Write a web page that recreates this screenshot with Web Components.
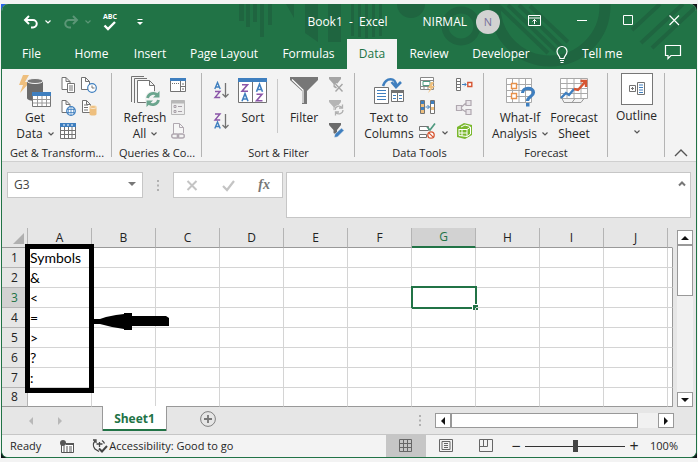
<!DOCTYPE html>
<html lang="en">
<head>
<meta charset="utf-8">
<title>Book1 - Excel</title>
<style>
body { margin: 0; padding: 4px 1px 5px; background: #f3f3f3; font: 12px/16px "Open Sans", "Noto Sans", sans-serif; color: #262626; }
</style>
</head>
<body>
<xl-window></xl-window>
<script>
const BASE = `*{box-sizing:border-box} button{font:inherit;color:inherit;background:none;border:0;padding:0;margin:0} svg{display:block;overflow:visible}`;
function define(name, css, html) {
  customElements.define(name, class extends HTMLElement {
    constructor() {
      super();
      this.attachShadow({ mode: 'open' });
    }
    connectedCallback() {
      const body = typeof html === 'function' ? html(this) : html;
      this.shadowRoot.innerHTML = `<style>${BASE}${css}</style>${body}`;
    }
  });
}

const G = '#737373', B = '#3f7fbf';
const page = (x, y, w, h, c = G) => `<path d="M${x} ${y}h${w - 4}l4 4v${h - 4}h${-w}z M${x + w - 4} ${y}v4h4" fill="#fff" stroke="${c}"/>`;
const funnel = (c) => `<path d="M1 0h12v2L9 7v5L5.500 10V7L1 2z" fill="${c}"/>`;
const ICONS = {
  undo: [16, 14, `<path d="M6 1L2 5l4 4M2 5h8a3.500 3.500 0 010 7.500H8" fill="none" stroke="#fff" stroke-width="2"/>`],
  redo: [16, 14, `<path d="M10 1l4 4-4 4M14 5H6a3.500 3.500 0 000 7.500h2" fill="none" stroke="#5b9676" stroke-width="2"/>`],
  caret: [6, 4, `<path d="M.5.5L3 3 5.500.5" fill="none" stroke="currentColor" stroke-width="1.200"/>`],
  check: [14, 10, `<path d="M1.500 4.500L5 8l7-7" fill="none" stroke="#fff" stroke-width="2.400"/>`],
  more: [6, 6, `<path d="M.5.500h5" stroke="#fff"/><path d="M0 3h6L3 6z" fill="#fff"/>`],
  ribbonopt: [13, 11, `<path d="M.5.500h12v10H.5zM.5 3h12M6.500 9V4.500M4.500 6.500l2-2 2 2" fill="none" stroke="#fff"/>`],
  min: [10, 11, `<path d="M0 5.500h10" stroke="#fff"/>`],
  max: [10, 11, `<path d="M.5.500h9v9h-9z" fill="none" stroke="#fff"/>`],
  close: [10, 11, `<path d="M.5.500l9.500 9.500M10 .5L.5 10" stroke="#fff" stroke-width="1.200"/>`],
  bulb: [12, 17, `<path d="M4 12.500C4 10 1 9 1 5.500a5 5 0 0110 0C11 9 8 10 8 12.500zM4 14.500h4M4.500 16.500h3" fill="none" stroke="#fff" stroke-width="1.200"/>`],
  comment: [16, 14, `<path d="M.5.500h15v10H6l-3 3v-3H.5z" fill="none" stroke="#fff" stroke-width="1.200"/>`],
  getdata: [32, 32, `<path d="M8 0h-4L0 10h4L1 18 11 7H6l4-7z" fill="#eebf7e"/><path d="M8 6v17c0 2 4 3 8 3s8-1 8-3V6z" fill="#6b6b6b"/><ellipse cx="16" cy="6" rx="8" ry="2.500" fill="#777" stroke="#f3f3f3"/><path d="M13.500 17.500h18v14h-18z" fill="#fff" stroke="#777"/><path d="M13 17h19v4H13z" fill="${B}"/><path d="M14 24.500h17M14 28h17M18.500 21v10M23 21v10M27.500 21v10" stroke="#999"/>`],
  textfile: [16, 16, page(2, .5, 8, 12) + `<path d="M7.500 6.500h7v9h-7z" fill="#fff" stroke="${G}"/><path d="M9 9h4M9 11h4M9 13h4" stroke="${G}"/>`],
  recent: [16, 16, page(.5, .5, 8, 12) + `<circle cx="11" cy="11" r="4.300" fill="#fff" stroke="${B}" stroke-width="1.200"/><path d="M11 8.500V11h2.500" fill="none" stroke="${G}"/>`],
  web: [16, 16, page(2, .5, 8, 12) + `<circle cx="11" cy="11" r="4.300" fill="#fff" stroke="${B}" stroke-width="1.200"/><path d="M7 9.500h8M7 12.500h8M11 7v8M9 8c-1 2-1 4 0 6M13 8c1 2 1 4 0 6" fill="none" stroke="${B}" stroke-width=".8"/>`],
  dbfile: [16, 16, page(1.5, .5, 8, 12) + `<path d="M3 5h4M3 7.500h4M3 10h4" stroke="${G}"/><path d="M8.500 7v7c0 1 1.500 1.500 3.500 1.500s3.500-.5 3.500-1.500V7z" fill="#eebf7e"/><ellipse cx="12" cy="7" rx="3.500" ry="1.500" fill="#eebf7e" stroke="#f8e7cd"/>`],
  table: [16, 16, `<path d="M.5.500h15v15H.5z" fill="#fff" stroke="${G}"/><path d="M0 0h16v4H0z" fill="${B}"/><path d="M1 7.500h14M1 11.500h14M4.500 4v11M8.500 4v11M12 4v11" stroke="${G}"/><path d="M3 2h2M7 2h2M11 2h2" stroke="#fff"/>`],
  refresh: [32, 32, `<path d="M2.500 27V1.500H15M5.500 28V3.500H18" fill="none" stroke="${G}"/><path d="M8.500 5.500h12l5 5v17h-17zM20.500 5.500v5h5" fill="#fff" stroke="${G}"/><circle cx="24" cy="24" r="8" fill="#f3f3f3"/><path d="M18.500 23a6 6 0 0110-3M29.500 25a6 6 0 01-10 3" fill="none" stroke="#6ba58e" stroke-width="2.800"/><path d="M30.500 16v6.500H24zM17.500 32v-6.500H24z" fill="#6ba58e"/>`],
  pane: [16, 14, `<path d="M.5.500h15v13H.5z" fill="#fff" stroke="${G}"/><path d="M0 0h16v3H0z" fill="${B}"/><path d="M2 5.500h1M4 5.500h1M6 5.500h1M8 5.500h1M10.500 3v10M11 8.500h4M12 6h2M12 11h2" stroke="${G}"/>`],
  props: [14, 15, `<path d="M.5.500h13v14H.5z" fill="#eee" stroke="#b8b8b8"/><path d="M.5 2h13" stroke="#b8b8b8" stroke-width="3"/><path d="M3 5.500h2v2H3zM3 10.500h2v2H3zM7 6.500h4M7 11.500h4" fill="none" stroke="#a8a0a8"/>`],
  link: [14, 16, `<path d="M2.500 11V.5h6l4 4V10M8.500.500v4h4" fill="#f6f6f6" stroke="#b0a8b0"/><rect x=".7" y="11" width="7" height="4" rx="2" fill="none" stroke="#b0a8b0" stroke-width="1.400"/><rect x="6.300" y="11" width="7" height="4" rx="2" fill="none" stroke="#b0a8b0" stroke-width="1.400"/>`],
  az: [15, 17, `<path d="M.8 7L3.500 0.500 6.200 7M1.700 5h3.600" fill="none" stroke="${B}" stroke-width="1.400"/><path d="M1 9.500h5L1 15.500h5.200" fill="none" stroke="#8b56a8" stroke-width="1.400"/><path d="M11.500 1v14M8.500 12l3 3 3-3" fill="none" stroke="${G}" stroke-width="1.300"/>`],
  za: [15, 17, `<path d="M1 1h5L1 7h5.200" fill="none" stroke="#8b56a8" stroke-width="1.400"/><path d="M.8 15.500L3.500 9l2.700 6.500M1.700 13.500h3.600" fill="none" stroke="${B}" stroke-width="1.400"/><path d="M11.500 1v14M8.500 12l3 3 3-3" fill="none" stroke="${G}" stroke-width="1.300"/>`],
  sort: [30, 26, `<path d="M.5.500h28v24H.5z" fill="#fff" stroke="${G}"/><path d="M0 0h29v4H0z" fill="${B}"/><path d="M14.500 4v21" stroke="${G}"/><path d="M4 6.700h5.500L4 13.300h6M18.500 16.200h5.500l-5.500 6.600h6" fill="none" stroke="#8b56a8" stroke-width="1.600"/><path d="M4 23.300l3-7.600 3 7.600M5 21h4M18.500 13.800l3-7.600 3 7.600M19.500 11.500h4" fill="none" stroke="${B}" stroke-width="1.600"/>`],
  filter: [28, 28, `<path d="M0 0h28v3L17 14v13h-5V14L0 3z" fill="#777"/><path d="M2 2.500L13 13v13" fill="none" stroke="#fff" stroke-width="1.200"/>`],
  clear: [16, 15, funnel('#a5a5a5') + `<path d="M7.500 7l7 7.500M14.500 7l-7 7.500" stroke="#f3f3f3" stroke-width="3"/><path d="M7.500 7l7 7.500M14.500 7l-7 7.500" stroke="#a5a5a5" stroke-width="1.400"/>`],
  reapply: [16, 15, funnel('#b5b5b5') + `<circle cx="11" cy="10" r="5" fill="#f3f3f3"/><path d="M7 10a4 4 0 017-2.500M15 10a4 4 0 01-7 2.500M14.500 4.500v3.500H11M7.500 15.500V12H11" fill="none" stroke="#b0b0b0" stroke-width="1.300"/>`],
  advanced: [16, 15, funnel('#6b6b6b') + `<path d="M6 14.500l1-3.500 6.500-6 2.500 2.500L9.500 14z" fill="${B}" stroke="#f3f3f3" stroke-width=".6"/>`],
  t2c: [32, 28, `<path d="M10 9c3-9 13-9 13 0M18.500 5l4.500 5 5-5" fill="none" stroke="${B}" stroke-width="2.600"/><path d="M1.500 10.500h14v16h-14z" fill="#fff" stroke="${G}"/><path d="M4 13.500h9M4 16.500h9M4 19.500h9M4 22.500h9" stroke="${B}"/><path d="M18.500 13.500h12v11h-12z" fill="#fff" stroke="${G}"/><path d="M18 13h13v3H18z" fill="${G}"/><path d="M20 18.500h3M26 18.500h3M20 21.500h3M26 21.500h3" stroke="${B}"/><path d="M24.500 16v8" stroke="${G}"/>`],
  flash: [17, 16, `<path d="M1.500.500h13v12h-13zM1.500 3.500h13M1.500 9.500h13M5 9.500v3M9 9.500v3" fill="#fff" stroke="#888"/><path d="M4 4.500h7v4H4z" fill="#fff" stroke="#4f9a80"/><path d="M12 5L9 11h2.500L9 16l7-7h-3l2-4z" fill="#eebf7e"/>`],
  dup: [17, 15, `<path d="M1.500.500h4v13h-4zM11.500.500h4v13h-4z" fill="#fff" stroke="${G}"/><path d="M2 1h3v3H2zM2 7h3v3H2z" fill="${B}"/><path d="M2 4h3v3H2zM2 10h3v3H2zM12 7h3v3h-3z" fill="#eebf7e"/><path d="M12 1h3v3h-3z" fill="${B}"/><path d="M6.500 7h4M8.500 5l2 2-2 2" fill="none" stroke="${B}"/>`],
  valid: [17, 16, `<path d="M.5 3.500h9v4h-9zM.5 11.500h7v3h-7z" fill="#fff" stroke="${G}"/><path d="M8 4l3 3 5-6.500" fill="none" stroke="#4f9a80" stroke-width="1.700"/><circle cx="12" cy="12" r="3.200" fill="#fff" stroke="#d65532" stroke-width="1.300"/><path d="M9.800 9.800l4.400 4.400" stroke="#d65532" stroke-width="1.200"/>`],
  consol: [17, 14, `<path d="M.5.500h4v12h-4zM.5 3.500h4M.5 6.500h4M.5 9.500h4" fill="#fff" stroke="${G}"/><path d="M6 6.500h4M8.500 4.800l1.700 1.700-1.700 1.700" fill="none" stroke="${B}"/><path d="M11.800 4.500h4v4h-4z" fill="#fff" stroke="#d65532" stroke-width="1.400"/>`],
  relation: [17, 16, `<path d="M.5 5.500h5v5h-5zM10 .5h5v5h-5zM10 9.500h5v5h-5zM5.500 7l4.500-4M5.500 9l4.500 3" fill="#e8e4e8" stroke="#b0a8b0" stroke-width="1.200"/>`],
  model: [17, 16, `<path d="M1 4l7-4 8 2v10l-7 4-8-2z" fill="#7ab82e"/><path d="M3 6.500h8v7M3 6v6.500l8 1M3 10h8M6 6.500v6.500M11 6.500l3.500-2.500v7L11 13.500M5 4l4-2 5 1.500" fill="none" stroke="#fff"/>`],
  whatif: [32, 32, `<path d="M2.500 3.500h25v24h-25zM2.500 9.500h25M2.500 15.500h25M2.500 21.500h25M8.500 3.500v24M15 3.500v24M21.500 3.500v24" fill="#fff" stroke="#a9a9a9"/><path d="M7.500 8.500h5v5h-5zM7.500 18.500h5v5h-5z" fill="#fff" stroke="#e8914a" stroke-width="1.400"/><path d="M18.500 18c0-6 11-6 11-.5 0 4-6 4-6 8.500" fill="none" stroke="${B}" stroke-width="3.200"/><path d="M22 28h3.500v3.500H22z" fill="${B}"/>`],
  forecast: [32, 32, `<path d="M2.500 3.500h27v20h-27zM2.500 8.500h27M2.500 13.500h27M2.500 18.500h27M9 3.500v20M16 3.500v20M23 3.500v20" fill="#fff" stroke="#a9a9a9"/><path d="M4 23.500l2 4h8l3-4M14 27.500h9l3-4" fill="none" stroke="#999"/><path d="M3 23l5-5 3 2 5-6" fill="none" stroke="${B}" stroke-width="2.400"/><path d="M16 14l4 1 8-9M22.500 6h5.500v6" fill="none" stroke="#d65532" stroke-width="2.400"/>`],
  outline: [16, 14, `<path d="M.5 3.500h6v6h-6z" fill="#fff" stroke="${G}"/><path d="M2 6.500h3M3.500 5v3" stroke="${G}"/><path d="M8.500.500h7v12h-7z" fill="none" stroke="${G}"/><path d="M10 3h4M10 5.500h4M10 8h4M10 10.500h4" stroke="${B}"/>`],
  collapse: [14, 8, `<path d="M1 7l6-6 6 6" fill="none" stroke="#555" stroke-width="1.400"/>`],
  drop: [8, 4, `<path d="M0 0h8L4 4z" fill="#777"/>`],
  cancel: [12, 11, `<path d="M1.500 1l9 9M10.500 1l-9 9" stroke="#c4c4c4" stroke-width="2"/>`],
  enter: [13, 11, `<path d="M1 6l4 4 7-9" fill="none" stroke="#c4c4c4" stroke-width="2.200"/>`],
  up: [8, 5, `<path d="M1 4.500l3-3 3 3" fill="none" stroke="#777" stroke-width="2"/>`],
  dots: [2, 11, `<path d="M0 0h2v2H0zM0 4.500h2v2H0zM0 9h2v2H0z" fill="#b0b0b0"/>`],
  plus: [16, 16, `<circle cx="8" cy="8" r="7.400" fill="none" stroke="#808080"/><path d="M8 4v8M4 8h8" stroke="#777" stroke-width="1.800"/>`],
  tleft: [4, 8, `<path d="M4 0v8L0 4z" fill="currentColor"/>`],
  tright: [4, 8, `<path d="M0 0v8l4-4z" fill="currentColor"/>`],
  tup: [8, 4, `<path d="M0 4h8L4 0z" fill="currentColor"/>`],
  tdown: [8, 4, `<path d="M0 0h8L4 4z" fill="currentColor"/>`],
  macro: [14, 13, `<path d="M1.500 3.500h12v9h-12z" fill="#fff" stroke="#555"/><path d="M6 3h8v2H6z" fill="#555"/><circle cx="3" cy="3" r="3" fill="#555"/><path d="M3 7h2M6 7h2M9 7h3M3 9h2M6 9h2M9 9h3M3 11h2M6 11h2M9 11h3" stroke="#555"/>`],
  access: [17, 14, `<path d="M4 2a6 6 0 000 8l4 2.500M11 1.500a6 6 0 012.500 3M2 1h3v3M5.500 5h6M8.500 3v5" fill="none" stroke="#444" stroke-width="1.300"/><path d="M8 9.500l3 3 5-5.500" fill="none" stroke="#444" stroke-width="2"/>`],
  normal: [14, 14, `<path d="M.5.500h12v12H.5zM.5 4.500h12M.5 8.500h12M4.500.500v12M8.500.500v12" fill="none" stroke="#666"/>`],
  layout: [14, 14, `<path d="M.5.500h13v12H.5zM3 2.500h8v8H3zM5 4.500h4M5 6.500h4M5 8.500h4" fill="none" stroke="#666"/>`],
  breaks: [14, 14, `<path d="M.5.500h13v12H.5zM.5 7.500h8v-7M4.500.500v7" fill="none" stroke="#666"/>`]
};
define('xl-icon', `:host{display:inline-block;flex:none}`, el => {
  const [w, h, art] = ICONS[el.getAttribute('name')];
  return `<svg width="${w}" height="${h}" viewBox="0 0 ${w} ${h}" aria-hidden="true">${art}</svg>`;
});

define('xl-titlebar', `
:host{display:block;position:relative;background:#217346;color:#fff;overflow:hidden}
.art{position:absolute;top:0;left:0}
.row{position:relative;display:grid;grid-template-columns:1fr auto;height:35px}
.quick{display:flex;align-items:center;gap:6px;padding-left:21px}
.quick button{display:flex}
.faded{color:#5b9676;margin-left:6px}
.spell{flex-direction:column;align-items:center;font-size:7px;line-height:8px;font-weight:700;margin:0 14px 0 6px}
.right{display:flex;align-items:center}
.user{margin:0 9px 0 35px}
.avatar{width:24px;height:24px;border-radius:12px;background:#d2d2d2;color:#77709a;font-size:11px;line-height:24px;text-align:center}
.ctl{display:grid;grid-template-columns:13px 10px 10px 10px;gap:36px;margin:0 17px 2px 28px}
.ctl button{display:flex}`, `
<svg class="art" width="697" height="65" fill="#1f6540" aria-hidden="true">
<path d="M237 0h5v17h-5zM244 0h4v23h-4zM251 0h4v18h-4zM258 0h4v33h-4zM266 0h4v21h-4zM284 0h8v14zM303 0h13v38l-13-9zM326 0h13v38h-13zM349 0h3v32h-3zM356 0h3v33h-3zM363 0h3v34h-3zM370 0h3v33h-3zM377 0h3v32h-3z"/>
<circle cx="409" cy="0" r="14"/><circle cx="459" cy="22" r="16" fill="none" stroke="#1f6540" stroke-width="7"/>
<circle cx="548" cy="2" r="55" fill="none" stroke="#1f6540" stroke-width="11"/>
<path d="M498 3l48 46M506 1l48 46M517 1l44 43M528 2l38 36M630 26l28-26M639 39l42-39M650 44l46-43" stroke="#1f6540" stroke-width="4"/></svg>
<div class="row">
<div class="quick"><button aria-label="Undo"><xl-icon name="undo"></xl-icon></button><xl-icon name="caret"></xl-icon>
<button class="faded" aria-label="Redo"><xl-icon name="redo"></xl-icon></button><xl-icon name="caret" style="color:#5b9676"></xl-icon>
<button class="spell" aria-label="Spelling"><span>ABC</span><xl-icon name="check"></xl-icon></button>
<button aria-label="Customize"><xl-icon name="more"></xl-icon></button></div>
<div class="right"><span>Book1&nbsp; -&nbsp; Excel</span><span class="user">NIRMAL</span><span class="avatar">N</span>
<div class="ctl"><button aria-label="Ribbon options"><xl-icon name="ribbonopt"></xl-icon></button><button aria-label="Minimize"><xl-icon name="min"></xl-icon></button><button aria-label="Maximize"><xl-icon name="max"></xl-icon></button><button aria-label="Close"><xl-icon name="close"></xl-icon></button></div></div>
</div><slot></slot>`);

define('xl-tabs', `
:host{display:flex;position:relative;height:30px;align-items:stretch;color:#fff}
button{flex:none;text-align:center}
.on{background:#f3f3f3;color:#217346}
.tell{display:flex;align-items:center;gap:14px;margin-left:15px}
.note{margin-left:auto;padding-right:15px}`, () =>
  [['File', 59], ['Home', 61], ['Insert', 56], ['Page Layout', 92], ['Formulas', 77], ['Data', 50], ['Review', 64], ['Developer', 80]]
    .map(([t, w]) => `<button style="width:${w}px" class="${t === 'Data' ? 'on' : ''}">${t}</button>`).join('') +
  `<button class="tell"><xl-icon name="bulb"></xl-icon>Tell me</button><button class="note" aria-label="Comments"><xl-icon name="comment"></xl-icon></button>`);

define('xl-group', `
:host{display:grid;grid-template-rows:1fr 16px;height:88px;background:linear-gradient(#b4b4b4,#b4b4b4) right top/1px 84px no-repeat;min-width:0}
.body{display:flex;align-items:flex-start}
.label{text-align:center;white-space:nowrap;font-size:11px;line-height:16px}`,
  el => `<div class="body"><slot></slot></div><div class="label">${el.getAttribute('label') || ''}</div>`);

define('xl-big', `
:host{display:block;flex:none;padding-top:2px}
button{display:flex;flex-direction:column;align-items:center;width:100%;text-align:center;white-space:nowrap}
.pic{height:32px;display:flex;align-items:center;margin-bottom:3px}
xl-icon[name=caret]{margin-left:5px;vertical-align:2px;color:#555}`,
  el => `<button><span class="pic"><xl-icon name="${el.getAttribute('icon')}"></xl-icon></span><span><slot></slot>${el.hasAttribute('menu') ? '<xl-icon name="caret"></xl-icon>' : ''}</span></button>`);

define('xl-small', `
:host{display:flex;flex-direction:column;flex:none;width:20px}
button{height:23px;display:flex;align-items:center;justify-content:center}
:host([tall]) button{height:31px} :host([tall]){padding-top:2px}`,
  el => el.getAttribute('icons').split(' ').map(n => `<button aria-label="${n}"><xl-icon name="${n}"></xl-icon></button>`).join(''));

define('xl-ribbon', `
:host{display:grid;grid-template-columns:110fr 90fr 153fr 129fr 124fr 57fr 31fr;padding:4px 0 0;background:#f3f3f3;border-bottom:1px solid #cfcfcf}
.in{width:1px;height:54px;background:#c8c8c8;margin:6px 0 0 2px}
.outline{display:flex;flex-direction:column;align-items:center;width:100%}
.outline span{width:32px;height:32px;border:1px solid #777;background:#fff;display:flex;align-items:center;justify-content:center;margin-bottom:3px}
.outline xl-icon[name=caret]{margin-top:6px;color:#555}
.menu{align-self:flex-end;height:22px;color:#555;margin:0 6px 0 5px}
.end{display:flex;align-items:flex-end;justify-content:center;padding-bottom:4px}`, `
<xl-group label="Get &amp; Transform..."><xl-big icon="getdata" menu style="width:44px;margin-left:11px">Get<br>Data</xl-big><xl-small icons="textfile web table" style="margin-left:1px"></xl-small><xl-small icons="recent dbfile" style="margin-left:1px"></xl-small></xl-group>
<xl-group label="Queries &amp; Co..."><xl-big icon="refresh" menu style="width:44px;margin-left:11px">Refresh<br>All</xl-big><xl-small icons="pane props link" style="margin-left:1px"></xl-small></xl-group>
<xl-group label="Sort &amp; Filter"><xl-small tall icons="az za" style="margin-left:9px"></xl-small><xl-big icon="sort" style="width:44px">Sort</xl-big><div class="in"></div><xl-big icon="filter" style="width:44px;margin-left:4px">Filter</xl-big><xl-small icons="clear reapply advanced"></xl-small></xl-group>
<xl-group label="Data Tools"><xl-big icon="t2c" style="width:56px;margin-left:6px">Text to<br>Columns</xl-big><xl-small icons="flash dup valid"></xl-small><span class="menu"><xl-icon name="caret"></xl-icon></span><xl-small icons="consol relation model"></xl-small></xl-group>
<xl-group label="Forecast"><xl-big icon="whatif" menu style="width:60px;margin-left:6px">What-If<br>Analysis</xl-big><xl-big icon="forecast" style="width:48px">Forecast<br>Sheet</xl-big></xl-group>
<xl-group><button class="outline"><span><xl-icon name="outline"></xl-icon></span>Outline<xl-icon name="caret"></xl-icon></button></xl-group>
<button class="end" aria-label="Collapse the ribbon"><xl-icon name="collapse"></xl-icon></button>`);

define('xl-formula', `
:host{display:grid;grid-template-columns:136px 30px 110px 1fr;padding:10px 5px;background:#e6e6e6;align-items:start}
button{display:flex}
.name,.fx{height:26px;border:1px solid #c6c6c6;background:#fff;display:flex;align-items:center}
.name input{flex:1;min-width:0;border:0;outline:0;background:none;font:inherit;color:#444;padding:0 6px}
.name button{padding:0 6px 2px 0}
.dots{justify-self:center;padding-top:8px}
.dots xl-icon{display:block}
.fx{justify-content:space-between;padding:0 12px}
.fx i{font:italic bold 14px/20px "Liberation Serif",serif;color:#777}
.bar{height:46px;margin-left:3px;border:1px solid #c6c6c6;background:#fff;display:flex}
textarea{flex:1;border:0;outline:0;resize:none;background:none}
.bar button{align-self:flex-start;padding:8px 4px}`, `
<label class="name"><input aria-label="Name box" value="G3"><button aria-label="Names"><xl-icon name="drop"></xl-icon></button></label>
<span class="dots"><xl-icon name="dots"></xl-icon></span>
<div class="fx"><button aria-label="Cancel"><xl-icon name="cancel"></xl-icon></button><button aria-label="Enter"><xl-icon name="enter"></xl-icon></button><button aria-label="Insert function"><i>fx</i></button></div>
<div class="bar"><textarea aria-label="Formula"></textarea><button aria-label="Collapse formula bar"><xl-icon name="up"></xl-icon></button></div>`);

define('xl-scroll', `
:host{display:flex;background:#f1f1f1}
:host([vertical]){flex-direction:column;width:16px}
:host(:not([vertical])){height:15px}
button,.thumb{background:#fff;border:1px solid #999;flex:none}
button{width:16px;height:15px;display:flex;align-items:center;justify-content:center;color:#111}
:host([vertical]) .thumb{height:51px}
:host(:not([vertical])) .thumb{flex:189}
.rest{flex:1}
:host(:not([vertical])) .rest{flex:21}`, el => {
  const v = el.hasAttribute('vertical');
  return `<button aria-label="Back"><xl-icon name="${v ? 'tup' : 'tleft'}"></xl-icon></button><div class="thumb"></div><div class="rest"></div><button aria-label="Forward"><xl-icon name="${v ? 'tdown' : 'tright'}"></xl-icon></button>`;
});

const COLS = 'ABCDEFGHIJ'.split('');
const DATA = ['Symbols', '&amp;', '&lt;', '=', '&gt;', '?', ':', ''];
define('xl-grid', `
:host{display:flex;background:#e6e6e6}
.sheet{flex:1;position:relative;min-width:0}
table{width:100%;table-layout:fixed;border-collapse:separate;border-spacing:0;background:#fff}
th,td{padding:0;height:20px;line-height:19px;border-right:1px solid #d4d4d4;border-bottom:1px solid #d4d4d4;white-space:nowrap}
th{font-weight:400;font-size:12px;background:#e6e6e6;border-color:#b4b4b4;color:#222}
thead th{border-bottom-color:#999;line-height:18px}
td:last-child{border-right-color:#999}
thead th:last-child{border-right-color:#e6e6e6}
tr:last-child td,tr:last-child th{border-bottom-color:#999}
tbody tr:last-child td,tbody tr:last-child th{height:19px;line-height:18px}
thead th.on{background:#d2d2d2;color:#217346;border-bottom:2px solid #217346}
tbody th.on{background:#d2d2d2;color:#217346}
td{font-family:Lato,"Open Sans",sans-serif;font-size:14px;padding-left:2px;color:#000;position:relative}
.corner{padding:0 3px 3px 0;vertical-align:bottom} .corner svg{margin-left:auto}
.sel{position:absolute;inset:-2px -2px -2px -1px;border:2px solid #217346}
.sel::after{content:"";position:absolute;right:-4px;bottom:-4px;width:5px;height:5px;background:#217346;border:1px solid #fff;box-sizing:content-box}
.frame{position:absolute;left:23px;top:16px;width:69px;height:149px;border:5px solid #000}
.arrow{position:absolute;left:91px;top:85px}
xl-scroll{margin:2px 3px 0 4px}`, () => `
<div class="sheet"><table><colgroup><col style="width:26px">${COLS.map(() => '<col style="width:64px">').join('')}<col></colgroup>
<thead><tr><th class="corner" aria-label="Select all"><svg width="11" height="11"><path d="M11 0v11H0z" fill="#b0b0b0"/></svg></th>${COLS.map(c => `<th class="${c === 'G' ? 'on' : ''}">${c}</th>`).join('')}<th></th></tr></thead>
<tbody>${DATA.map((d, r) => `<tr><th class="${r === 2 ? 'on' : ''}">${r + 1}</th><td>${d}</td>${COLS.slice(1).map(c => `<td>${r === 2 && c === 'G' ? '<div class="sel"></div>' : ''}</td>`).join('')}<td></td></tr>`).join('')}</tbody></table>
<div class="frame"></div><svg class="arrow" width="76" height="18"><path d="M0 6h7l6-2 10-2 8-1V0h8v3h34l3 2v8H39v4h-8v-1l-12-2-8-2-4-1H0z"/></svg></div>
<xl-scroll vertical></xl-scroll>`);

define('xl-sheets', `
:host{display:flex;align-items:center;height:27px;background:#e6e6e6;padding-right:22px}
.nav{display:flex;gap:25px;padding-left:27px;color:#b8b8b8;width:100px}
.tab{align-self:flex-start;width:65px;margin-top:-1px;background:#fff;border:solid #999;border-width:0 1px;box-shadow:inset 0 -2px #217346;color:#217346;font-weight:700;height:25px;position:relative}
.add{margin-left:33px}
.sp{flex:203} .dots{margin-right:14px} xl-scroll{flex:239}`, `
<div class="nav"><xl-icon name="tleft"></xl-icon><xl-icon name="tright"></xl-icon></div><button class="tab">Sheet1</button><button class="add" aria-label="New sheet"><xl-icon name="plus"></xl-icon></button><span class="sp"></span><xl-icon class="dots" name="dots"></xl-icon><xl-scroll></xl-scroll>`);

define('xl-status', `
:host{display:flex;align-items:center;height:23px;background:#f3f3f3;border-top:1px solid #c6c6c6;padding-left:8px;font-size:11px}
button{display:flex;align-items:center;justify-content:center}
.ready{margin-right:19px}.acc{gap:1px;margin:0 auto 0 17px}
.view{width:40px;height:22px}
.on{background:#c6c6c6}
.z{width:10px;font-size:16px}
input{-webkit-appearance:none;appearance:none;width:100px;height:12px;margin:0 4px;background:linear-gradient(#333,#333) center/100% 1px no-repeat}
input::-webkit-slider-thumb{-webkit-appearance:none;width:5px;height:12px;background:#444}
.pct{margin:0 18px 0 11px}
.zoom{display:flex;align-items:center;margin-left:5px}`, `
<span class="ready">Ready</span><button aria-label="Record macro"><xl-icon name="macro"></xl-icon></button><button class="acc"><xl-icon name="access"></xl-icon>Accessibility: Good to go</button>
<button class="view on" aria-label="Normal"><xl-icon name="normal"></xl-icon></button><button class="view" aria-label="Page layout"><xl-icon name="layout"></xl-icon></button><button class="view" aria-label="Page break preview"><xl-icon name="breaks"></xl-icon></button>
<div class="zoom"><button class="z" aria-label="Zoom out">−</button><input type="range" aria-label="Zoom" min="0" max="100" value="50"><button class="z" aria-label="Zoom in">+</button><span class="pct">100%</span></div>`);

define('xl-window', `
:host{display:block;background:conic-gradient(#101418 75%,#2563eb 0)}
main{border:solid #217346;border-width:0 1px 1px;border-radius:7px;overflow:hidden;background:#e6e6e6}`, `
<main><xl-titlebar><xl-tabs></xl-tabs></xl-titlebar><xl-ribbon></xl-ribbon><xl-formula></xl-formula><xl-grid></xl-grid><xl-sheets></xl-sheets><xl-status></xl-status></main>`);
</script>
</body>
</html>
